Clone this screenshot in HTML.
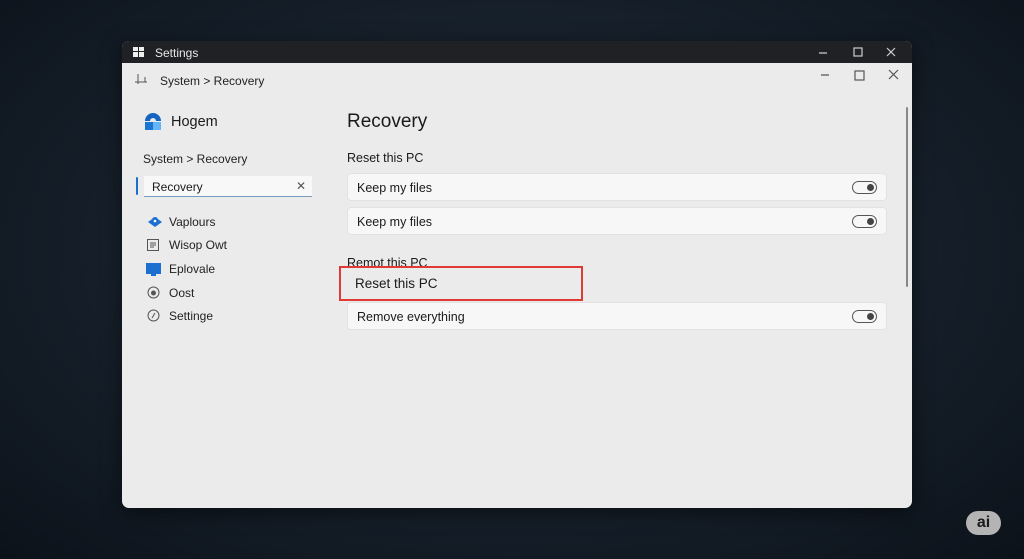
<!DOCTYPE html>
<html><head><style>
*{margin:0;padding:0;box-sizing:border-box}
body{width:1024px;height:559px;overflow:hidden;background:radial-gradient(ellipse at 50% 45%,#22303f 0%,#17212c 50%,#0c121a 100%);font-family:"Liberation Sans",sans-serif;position:relative;color:#1a1a1a}
.win{position:absolute;left:122px;top:41px;width:790px;height:467px;border-radius:7px;overflow:hidden;background:#ebebeb;box-shadow:0 4px 20px rgba(0,0,0,.5)}
.tb{height:22px;background:#202124;color:#e8e8e8;font-size:12px;position:relative}
.tb .t{position:absolute;left:33px;top:5px}
.abs{position:absolute}
.sub{font-size:12px;color:#222}
.card{position:absolute;left:225px;width:540px;height:28px;background:#f7f7f7;border-radius:4px;border:1px solid #e2e2e2;font-size:12.5px;padding:7px 0 0 9px}
.tg{position:absolute;right:9px;top:7px;width:25px;height:13px;border:1.4px solid #555;border-radius:7px}
.tg:after{content:"";position:absolute;right:2px;top:2px;width:7px;height:7px;border-radius:50%;background:#444}
.nav{position:absolute;left:47px;font-size:12px;color:#222}
.ic{position:absolute;left:25px}
</style></head><body>
<div class="win">
 <div class="tb">
  <svg class="abs" style="left:11px;top:6px" width="11" height="10"><rect x="0" y="0" width="5" height="4" fill="#eee"/><rect x="6" y="0" width="5" height="4" fill="#eee"/><rect x="0" y="5" width="5" height="5" fill="#eee"/><rect x="6" y="5" width="5" height="5" fill="#eee"/></svg>
  <span class="t">Settings</span>
  <svg class="abs" style="left:690px;top:5px" width="90" height="12" stroke="#ccc" fill="none" stroke-width="1.2"><line x1="7" y1="7" x2="15" y2="7"/><rect x="42" y="2" width="8" height="8"/><path d="M75 2l8 8M83 2l-8 8"/></svg>
 </div>
 <svg class="abs" style="left:13px;top:33px" width="12" height="10" stroke="#555" fill="none"><path d="M0 8h12M3 0v10M10 3v5"/></svg>
 <div class="abs sub" style="left:38px;top:33px">System &gt; Recovery</div>
 <svg class="abs" style="left:690px;top:27px" width="90" height="14" stroke="#555" fill="none" stroke-width="1.2"><line x1="9" y1="7" x2="17" y2="7"/><rect x="43" y="3" width="9" height="9"/><path d="M77 2l9 9M86 2l-9 9"/></svg>
 <svg class="abs" style="left:21px;top:70px" width="20" height="20"><path d="M2 10a8 8 0 0 1 16 0h-5a3 3 0 0 0-6 0z" fill="#1565c0"/><rect x="2" y="11" width="8" height="8" fill="#1976d2"/><rect x="10" y="11" width="8" height="8" fill="#64b5f6"/></svg>
 <div class="abs" style="left:49px;top:73px;font-size:14.5px">Hogem</div>
 <div class="abs sub" style="left:21px;top:111px">System &gt; Recovery</div>
 <div class="abs" style="left:14px;top:136px;width:2px;height:18px;background:#1a6fd0;border-radius:1px"></div>
 <div class="abs" style="left:22px;top:135px;width:168px;height:21px;background:#f8f8f8;border-bottom:1px solid #7a9cc0;font-size:12px;padding:4px 0 0 8px">Recovery<span class="abs" style="right:6px;top:3px;color:#555">✕</span></div>
 <svg class="ic" style="top:174px" width="16" height="12"><path d="M1 7l7-5 7 5-7 5z" fill="#1a6fd0"/><circle cx="8" cy="5" r="3" fill="#1a6fd0"/><circle cx="8" cy="6" r="1.3" fill="#fff"/></svg>
 <div class="nav" style="top:174px">Vaplours</div>
 <svg class="ic" style="top:198px" width="12" height="12" stroke="#555" fill="none"><rect x=".5" y=".5" width="11" height="11"/><path d="M3 4h6M3 6h6M3 8h4"/></svg>
 <div class="nav" style="top:197px">Wisop Owt</div>
 <svg class="ic" style="left:24px;top:222px" width="15" height="13"><rect x="0" y="0" width="15" height="11" fill="#1a6fd0"/><rect x="5" y="11" width="5" height="2" fill="#1a6fd0"/></svg>
 <div class="nav" style="top:221px">Eplovale</div>
 <svg class="ic" style="top:245px" width="13" height="13" stroke="#555" fill="none"><circle cx="6.5" cy="6.5" r="5.5"/><circle cx="6.5" cy="7" r="2" fill="#555"/></svg>
 <div class="nav" style="top:245px">Oost</div>
 <svg class="ic" style="top:268px" width="13" height="13" stroke="#555" fill="none"><circle cx="6.5" cy="6.5" r="5.5"/><path d="M5 9l3-5"/></svg>
 <div class="nav" style="top:268px">Settinge</div>
 <div class="abs" style="left:225px;top:70px;font-size:19px">Recovery</div>
 <div class="abs" style="left:225px;top:110px;font-size:12.5px">Reset this PC</div>
 <div class="card" style="top:132px">Keep my files<div class="tg"></div></div>
 <div class="card" style="top:166px">Keep my files<div class="tg"></div></div>
 <div class="abs" style="left:225px;top:215px;font-size:12.5px">Remot this PC</div>
 <div class="abs" style="left:217px;top:225px;width:244px;height:35px;border:2.5px solid #e03a35;background:#ebebeb;font-size:13.5px;padding:8px 0 0 14px">Reset this PC</div>
 <div class="card" style="top:261px">Remove everything<div class="tg"></div></div>
 <div class="abs" style="left:784px;top:66px;width:2px;height:180px;background:#888;border-radius:1px"></div>
</div>
<div class="abs" style="left:966px;top:511px;width:35px;height:24px;border-radius:12px;background:#b4b4b4;color:#1a1a1a;font-size:16px;font-weight:bold;text-align:center;line-height:24px">ai</div>
</body></html>
